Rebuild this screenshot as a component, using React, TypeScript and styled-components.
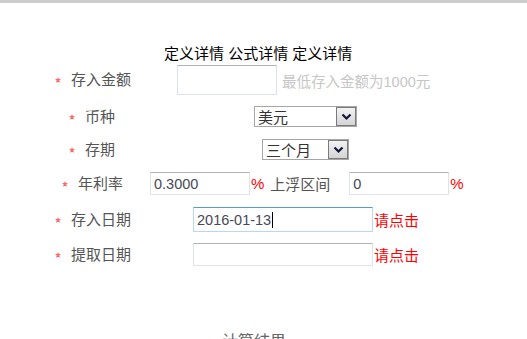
import styled, { createGlobalStyle } from "styled-components";

const GlobalStyle = createGlobalStyle`
  html, body {
    margin: 0;
    padding: 0;
    background: #fff;
  }
  body {
    font-family: "Liberation Sans", "Noto Sans CJK SC", sans-serif;
  }
`;

const Page = styled.div`
  width: 527px;
  height: 339px;
  overflow: hidden;
  border-top: 3px solid #cccccc;
  box-sizing: border-box;
`;

const Title = styled.div`
  margin-top: 41px;
  padding-left: 164px;
  height: 20px;
  line-height: 20px;
  font-size: 15px;
  color: #000;
`;

const Form = styled.div`
  display: flex;
  flex-direction: column;
`;

const Row = styled.div<{ $indent: number; $top: number; $h: number }>`
  display: flex;
  align-items: center;
  padding-left: ${(p) => p.$indent}px;
  margin-top: ${(p) => p.$top}px;
  height: ${(p) => p.$h}px;
`;

const StarBox = styled.span`
  display: inline-flex;
  width: 6px;
  height: 6px;
  margin-right: 10px;
`;

const Label = styled.span<{ $w: number }>`
  width: ${(p) => p.$w}px;
  flex: none;
  font-size: 15px;
  color: #555;
  line-height: 20px;
`;

const TextBox = styled.div<{ $w: number; $h: number; $focus?: boolean }>`
  box-sizing: border-box;
  width: ${(p) => p.$w}px;
  height: ${(p) => p.$h}px;
  border: 1px solid ${(p) => (p.$focus ? "#b9d8ee" : "#dde3e9")};
  border-top-color: ${(p) => (p.$focus ? "#5a9bcb" : "#b3b3b3")};
  display: flex;
  align-items: center;
  padding-left: 3px;
  font-size: 14.5px;
  color: #454a55;
  background: #fff;
`;

const Caret = styled.span`
  display: inline-block;
  width: 1px;
  height: 16px;
  background: #000;
  margin-left: 1px;
`;

const Hint = styled.span`
  margin-left: 5px;
  font-size: 14.5px;
  color: #c6c6c6;
`;

const Red = styled.span<{ $gap?: number }>`
  margin-left: ${(p) => p.$gap ?? 1}px;
  font-size: 15px;
  color: #ff0000;
`;

const Plain = styled.span<{ $w: number }>`
  width: ${(p) => p.$w}px;
  margin-left: 6px;
  font-size: 15px;
  color: #555;
`;

const Select = styled.div<{ $w: number }>`
  box-sizing: border-box;
  width: ${(p) => p.$w}px;
  height: 21px;
  border: 1px solid #a6a6a6;
  display: flex;
  align-items: center;
  justify-content: space-between;
  padding-left: 3px;
  font-size: 15px;
  color: #333;
  background: #fff;
`;

const SelectButton = styled.span`
  box-sizing: border-box;
  width: 20px;
  height: 19px;
  border: 1px solid #7a7a7a;
  background: linear-gradient(#f2f2f2, #d4d4d4);
  display: flex;
  align-items: center;
  justify-content: center;
`;

const Result = styled.div`
  margin-top: 62px;
  padding-left: 222px;
  font-size: 16px;
  color: #666;
`;

const Star = () => (
  <StarBox>
    <svg width="6" height="6" viewBox="0 0 10 10">
      <polygon
        points="5,0 6.2,3.6 10,3.6 6.9,5.9 8.1,9.6 5,7.3 1.9,9.6 3.1,5.9 0,3.6 3.8,3.6"
        fill="#f23a5e"
      />
      <circle cx="5" cy="5.2" r="1.6" fill="#ff9a2e" />
    </svg>
  </StarBox>
);

const Chevron = () => (
  <svg width="11" height="8" viewBox="0 0 11 8">
    <path d="M1.5 1.5 L5.5 5.5 L9.5 1.5" stroke="#10163a" strokeWidth="2.2" fill="none" />
  </svg>
);

const Dropdown = ({ value, width }: { value: string; width: number }) => (
  <Select $w={width}>
    <span>{value}</span>
    <SelectButton>
      <Chevron />
    </SelectButton>
  </Select>
);

export default function App() {
  return (
    <>
      <GlobalStyle />
      <Page>
        <Title>定义详情 公式详情 定义详情</Title>
        <Form>
          <Row $indent={55} $top={1} $h={30}>
            <Star />
            <Label $w={106}>存入金额</Label>
            <TextBox $w={100} $h={30} />
            <Hint>最低存入金额为1000元</Hint>
          </Row>
          <Row $indent={69} $top={11} $h={21}>
            <Star />
            <Label $w={169}>币种</Label>
            <Dropdown value="美元" width={103} />
          </Row>
          <Row $indent={69} $top={12} $h={21}>
            <Star />
            <Label $w={177}>存期</Label>
            <Dropdown value="三个月" width={87} />
          </Row>
          <Row $indent={62} $top={12} $h={23}>
            <Star />
            <Label $w={72}>年利率</Label>
            <TextBox $w={100} $h={23}>0.3000</TextBox>
            <Red>%</Red>
            <Plain $w={79}>上浮区间</Plain>
            <TextBox $w={100} $h={23}>0</TextBox>
            <Red>%</Red>
          </Row>
          <Row $indent={55} $top={12} $h={25}>
            <Star />
            <Label $w={122}>存入日期</Label>
            <TextBox $w={180} $h={25} $focus>
              2016-01-13
              <Caret />
            </TextBox>
            <Red>请点击</Red>
          </Row>
          <Row $indent={55} $top={11} $h={23}>
            <Star />
            <Label $w={122}>提取日期</Label>
            <TextBox $w={180} $h={23} />
            <Red>请点击</Red>
          </Row>
        </Form>
        <Result>计算结果</Result>
      </Page>
    </>
  );
}
